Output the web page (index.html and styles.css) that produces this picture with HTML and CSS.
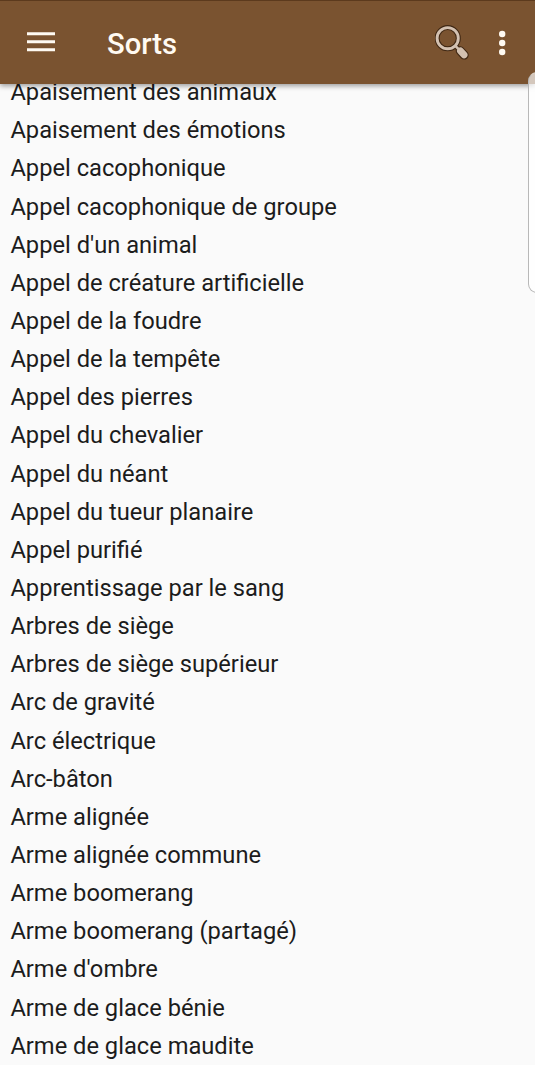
FILE: index.html
```html
<!DOCTYPE html>
<html lang="fr">
<head>
<meta charset="utf-8">
<title>Sorts</title>
<link rel="stylesheet" href="styles.css">
</head>
<body>
<div class="app">
  <header class="toolbar">
    <svg class="menu-icon" width="28" height="20" viewBox="0 0 28 20"><path d="M0 1.8h28M0 9.8h28M0 17.8h28" stroke="#fffaf2" stroke-width="2.9"/></svg>
    <h1 class="title">Sorts</h1>
    <svg class="search-icon" width="36" height="38" viewBox="0 0 36 38">
      <g fill="none" stroke="#3f2713">
        <circle cx="12.7" cy="14.2" r="10.6" stroke-width="5"/>
        <path d="M20.5 22l4 4" stroke-width="5"/>
        <path d="M25.2 26.7l4 4.4" stroke-width="9" stroke-linecap="round"/>
      </g>
      <g fill="none" stroke="#d3c1b1">
        <circle cx="12.7" cy="14.2" r="10.6" stroke-width="2.9"/>
        <path d="M20.3 21.8l4 4" stroke-width="2.6"/>
        <path d="M25.4 26.9l3.7 4" stroke-width="6.8" stroke-linecap="round"/>
      </g>
    </svg>
    <svg class="more-icon" width="8" height="26" viewBox="0 0 8 26" fill="#fffaf2"><circle cx="4.2" cy="4" r="3.2"/><circle cx="4.2" cy="13" r="3.2"/><circle cx="4.2" cy="22" r="3.2"/></svg>
  </header>
  <ul class="spells">
    <li>Apaisement des animaux</li>
    <li>Apaisement des émotions</li>
    <li>Appel cacophonique</li>
    <li>Appel cacophonique de groupe</li>
    <li>Appel d'un animal</li>
    <li>Appel de créature artificielle</li>
    <li>Appel de la foudre</li>
    <li>Appel de la tempête</li>
    <li>Appel des pierres</li>
    <li>Appel du chevalier</li>
    <li>Appel du néant</li>
    <li>Appel du tueur planaire</li>
    <li>Appel purifié</li>
    <li>Apprentissage par le sang</li>
    <li>Arbres de siège</li>
    <li>Arbres de siège supérieur</li>
    <li>Arc de gravité</li>
    <li>Arc électrique</li>
    <li>Arc-bâton</li>
    <li>Arme alignée</li>
    <li>Arme alignée commune</li>
    <li>Arme boomerang</li>
    <li>Arme boomerang (partagé)</li>
    <li>Arme d'ombre</li>
    <li>Arme de glace bénie</li>
    <li>Arme de glace maudite</li>
  </ul>
  <div class="edge-handle"></div>
</div>
</body>
</html>
```
FILE: styles.css
```css
* { box-sizing: border-box; }
body { margin: 0; background: #fafafa; font-family: Roboto, "Liberation Sans", sans-serif; }
.app { position: relative; height: 1065px; overflow: hidden; }
.toolbar {
  position: relative;
  z-index: 1;
  display: flex;
  align-items: center;
  height: 84px;
  padding: 1px 29px 0 27.4px;
  background: #7a5330;
  border-top: 1px solid #5c3a1d;
  box-shadow: 0 2px 5px rgba(0, 0, 0, .38);
}
.menu-icon { flex: none; margin-bottom: 2px; }
.title { flex: 1; margin: 1px 0 0 51.6px; color: #fffaf2; font-size: 29.2px; font-weight: 500; line-height: 34px; }
.search-icon { flex: none; margin-right: 27.5px; }
.more-icon { flex: none; margin-bottom: 1px; }
.spells { margin: -10.8px 0 0; padding: 0 0 0 10.4px; list-style: none; color: #1c1c1c; font-size: 23.7px; }
.spells li { height: 38.15px; line-height: 38.15px; white-space: nowrap; }
.edge-handle {
  position: absolute;
  z-index: 2;
  top: 72px;
  right: -15px;
  width: 22px;
  height: 221px;
  border: 1px solid #b8b8b8;
  border-top-color: rgba(220, 210, 200, .6);
  border-radius: 9px;
  background: rgba(255, 255, 255, .68);
}
```
